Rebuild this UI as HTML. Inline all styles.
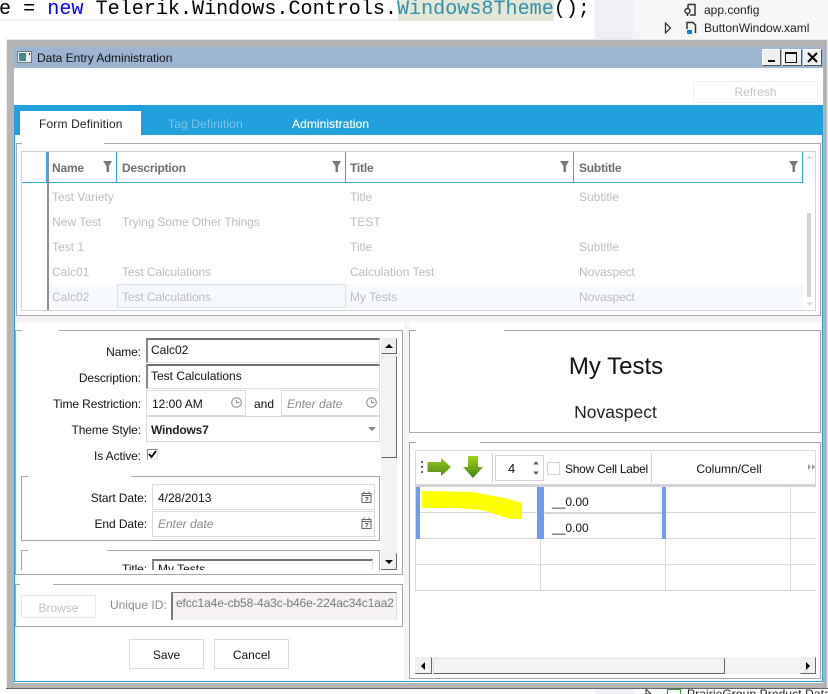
<!DOCTYPE html>
<html><head><meta charset="utf-8"><style>
html,body{margin:0;padding:0;background:#fff}
#p{position:relative;width:828px;height:694px;overflow:hidden;background:#fff;font-family:"Liberation Sans",sans-serif;font-size:12px;color:#111}
#p div{position:absolute;box-sizing:border-box}
.t{white-space:nowrap;line-height:16px;height:16px}
.g{color:#bcbcbc}
.n{letter-spacing:-.1px}
.h{font-weight:bold;color:#6e6e6e;letter-spacing:-.2px}
.r{text-align:right}
.c{text-align:center}
.b{background:#fff;border:1px solid #d9d9d9}
.in{background:#fff;border:1px solid #ddd;border-top:2px solid #707070;border-left:2px solid #8a8a8a}
.gb{border:1px solid #a6a6a6}
.gap{background:#fff;height:3px}
.wb{background:#f0f0f0;border:1px solid;border-color:#fff #555 #555 #fff}
.sb{background:#f0f0f0;border:1px solid;border-color:#eee #666 #666 #eee}
svg{position:absolute;display:block}
</style></head><body><div id="p">

<!-- background code editor -->
<div style="left:0;top:19px;width:398px;height:2px;background:#eee"></div>
<div style="left:398px;top:0;width:156px;height:21px;background:#e4e6d6"></div>
<div style="left:595px;top:0;width:38px;height:40px;background:#f1eff6"></div>
<div style="left:633px;top:0;width:195px;height:40px;background:#f6f6f6"></div>
<div class="t" style="left:-13px;top:-2px;height:24px;font:20.1px/24px 'Liberation Mono',monospace;color:#000">me = <span style="color:#0000ff">new</span> Telerik.Windows.Controls.<span style="color:#2b91af">Windows8Theme</span>();</div>
<svg style="left:684px;top:3px" width="14" height="14" viewBox="0 0 14 14"><path d="M4 1.500H11V12H6M4 1.500V5" fill="none" stroke="#333" stroke-width="1.500"/><circle cx="3.500" cy="8" r="2.500" fill="none" stroke="#333" stroke-width="1.500"/><path d="M3.500 10V13" stroke="#333" stroke-width="1.500"/></svg>
<div class="t" style="left:704px;top:2px;color:#222;font-size:12px">app.config</div>
<svg style="left:664px;top:22px" width="8" height="12" viewBox="0 0 8 12"><path d="M1.500 1V11L6.500 6Z" fill="#fff" stroke="#333" stroke-width="1.300"/></svg>
<svg style="left:684px;top:21px" width="14" height="14" viewBox="0 0 14 14"><path d="M3 8V1.500H9L11.500 4V12" fill="none" stroke="#333" stroke-width="1.500"/><rect x="3" y="9" width="5" height="4" fill="#0a84d0"/></svg>
<div class="t" style="left:704px;top:20px;color:#222;font-size:12px">ButtonWindow.xaml</div>

<!-- window frame -->
<div style="left:6px;top:39px;width:822px;height:1px;background:#e8e8e8"></div>
<div style="left:7px;top:40px;width:820px;height:648px;background:#b5b5b5"></div>
<div style="left:6px;top:688px;width:822px;height:1px;background:#666"></div>
<div style="left:6px;top:40px;width:1px;height:648px;background:#e8e8e8"></div>
<div style="left:827px;top:40px;width:1px;height:648px;background:#eee"></div>
<div style="left:14px;top:47px;width:809px;height:636px;background:#fff"></div>
<div style="left:14px;top:47px;width:809px;height:21px;background:#9cb5d3"></div>
<svg style="left:17px;top:51px" width="15" height="12" viewBox="0 0 15 12"><rect x=".5" y=".5" width="14" height="11" fill="#eee" stroke="#777"/><rect x="2" y="2" width="7" height="8" fill="#3f8a8a"/><rect x="12" y="2" width="1" height="2" fill="#333"/></svg>
<div class="t" style="left:37px;top:50px;font-size:12px;color:#111">Data Entry Administration</div>
<div class="wb" style="left:762px;top:49px;width:19px;height:17px"></div>
<div style="left:768px;top:60px;width:7px;height:2px;background:#111"></div>
<div class="wb" style="left:782px;top:49px;width:20px;height:17px"></div>
<div style="left:785px;top:52px;width:12px;height:11px;border:1px solid #111;border-top-width:2px"></div>
<div class="wb" style="left:803px;top:49px;width:19px;height:17px"></div>
<svg style="left:807px;top:52px" width="11" height="11" viewBox="0 0 11 11"><path d="M1 1L10 10M10 1L1 10" stroke="#000" stroke-width="2"/></svg>

<div style="left:693px;top:81px;width:125px;height:22px;border:1px solid #eee"></div>
<div class="t c g" style="left:693px;top:84px;width:125px;color:#c4c4c4">Refresh</div>

<!-- tabs -->
<div style="left:14px;top:105px;width:809px;height:30px;background:#20a0dd"></div>
<div style="left:20px;top:111px;width:121px;height:24px;background:#fff"></div>
<div class="t" style="left:39px;top:116px;color:#222;letter-spacing:.15px">Form Definition</div>
<div class="t" style="left:168px;top:116px;color:#7fc5ea;letter-spacing:.15px">Tag Definition</div>
<div class="t" style="left:292px;top:116px;color:#fff;letter-spacing:.08px;text-shadow:0 0 .4px #fff">Administration</div>
<div style="left:14px;top:135px;width:1px;height:547px;background:#20a0dd"></div>
<div style="left:822px;top:105px;width:1px;height:577px;background:#20a0dd"></div>
<div style="left:14px;top:681px;width:809px;height:1px;background:#20a0dd"></div>

<!-- top group -->
<div class="gb" style="left:16px;top:143px;width:805px;height:173px"></div>
<div class="gap" style="left:22px;top:142px;width:82px"></div>
<div style="left:21px;top:151px;width:795px;height:160px;border:1px solid #d3d3d3"></div>
<div style="left:22px;top:182px;width:781px;height:1px;background:#33a5df"></div>
<div style="left:46px;top:152px;width:1px;height:31px;background:#33a5df"></div>
<div style="left:47px;top:152px;width:2px;height:158px;background:#8f8f8f"></div>
<div style="left:116px;top:152px;width:1px;height:31px;background:#33a5df"></div>
<div style="left:345px;top:152px;width:1px;height:31px;background:#33a5df"></div>
<div style="left:573px;top:152px;width:1px;height:31px;background:#33a5df"></div>
<div style="left:802px;top:152px;width:1px;height:31px;background:#33a5df"></div>
<div class="t h" style="left:52px;top:160px">Name</div>
<div class="t h" style="left:122px;top:160px">Description</div>
<div class="t h" style="left:350px;top:160px">Title</div>
<div class="t h" style="left:579px;top:160px">Subtitle</div>
<svg style="left:103px;top:161px" width="9" height="11" viewBox="0 0 9 11"><path d="M0 0H9L6 5V11H3.500V5Z" fill="#777"/></svg>
<svg style="left:332px;top:161px" width="9" height="11" viewBox="0 0 9 11"><path d="M0 0H9L6 5V11H3.500V5Z" fill="#777"/></svg>
<svg style="left:560px;top:161px" width="9" height="11" viewBox="0 0 9 11"><path d="M0 0H9L6 5V11H3.500V5Z" fill="#777"/></svg>
<svg style="left:789px;top:161px" width="9" height="11" viewBox="0 0 9 11"><path d="M0 0H9L6 5V11H3.500V5Z" fill="#777"/></svg>

<div style="left:49px;top:285px;width:754px;height:23px;background:#f6f9fe"></div>
<div style="left:117px;top:284px;width:229px;height:24px;border:1px solid #d8e2ea"></div>
<div class="t g" style="left:52px;top:189px">Test Variety</div><div class="t g" style="left:350px;top:189px">Title</div><div class="t g" style="left:579px;top:189px">Subtitle</div>
<div class="t g" style="left:52px;top:214px">New Test</div><div class="t g n" style="left:122px;top:214px">Trying Some Other Things</div><div class="t g" style="left:350px;top:214px">TEST</div>
<div class="t g" style="left:52px;top:239px">Test 1</div><div class="t g" style="left:350px;top:239px">Title</div><div class="t g" style="left:579px;top:239px">Subtitle</div>
<div class="t g" style="left:52px;top:264px">Calc01</div><div class="t g n" style="left:122px;top:264px">Test Calculations</div><div class="t g" style="left:350px;top:264px">Calculation Test</div><div class="t g n" style="left:579px;top:264px">Novaspect</div>
<div class="t g" style="left:52px;top:289px">Calc02</div><div class="t g n" style="left:122px;top:289px">Test Calculations</div><div class="t g" style="left:350px;top:289px">My Tests</div><div class="t g n" style="left:579px;top:289px">Novaspect</div>
<div style="left:807px;top:213px;width:4px;height:84px;background:#d2d2d2"></div>
<svg style="left:806px;top:155px" width="7" height="4" viewBox="0 0 7 4"><path d="M3.500 0L7 4H0Z" fill="#ddd"/></svg>
<svg style="left:806px;top:302px" width="7" height="4" viewBox="0 0 7 4"><path d="M3.500 4L7 0H0Z" fill="#ddd"/></svg>

<!-- pink bands -->
<div style="left:15px;top:316px;width:807px;height:6px;background:#f6f2f5"></div>
<div style="left:404px;top:322px;width:5px;height:359px;background:#f6f2f5"></div>

<!-- left form group -->
<div class="gb" style="left:15px;top:330px;width:388px;height:245px"></div>
<div class="gap" style="left:22px;top:329px;width:37px"></div>

<div class="t r n" style="left:40px;top:344px;width:101px">Name:</div>
<div class="in" style="left:146px;top:338px;width:234px;height:25px"></div>
<div class="t" style="left:151px;top:342px">Calc02</div>
<div class="t r n" style="left:40px;top:370px;width:101px">Description:</div>
<div class="in" style="left:146px;top:364px;width:234px;height:25px"></div>
<div class="t" style="left:151px;top:368px">Test Calculations</div>
<div class="t r n" style="left:40px;top:396px;width:101px">Time Restriction:</div>
<div class="b" style="left:146px;top:390px;width:100px;height:26px"></div>
<div class="t" style="left:152px;top:396px">12:00 AM</div>
<svg style="left:231px;top:397px" width="11" height="11" viewBox="0 0 11 11"><circle cx="5.500" cy="5.500" r="4.800" fill="none" stroke="#888"/><path d="M5.500 2.500V5.500H8.500" fill="none" stroke="#888"/></svg>
<div class="t" style="left:254px;top:396px">and</div>
<div class="b" style="left:281px;top:390px;width:99px;height:26px"></div>
<div class="t" style="left:287px;top:396px;font-style:italic;color:#8a8a8a">Enter date</div>
<svg style="left:366px;top:397px" width="11" height="11" viewBox="0 0 11 11"><circle cx="5.500" cy="5.500" r="4.800" fill="none" stroke="#888"/><path d="M5.500 2.500V5.500H8.500" fill="none" stroke="#888"/></svg>
<div class="t r n" style="left:40px;top:422px;width:101px">Theme Style:</div>
<div class="b" style="left:146px;top:416px;width:234px;height:26px"></div>
<div class="t" style="left:151px;top:422px;font-weight:bold;color:#222;font-size:12px;letter-spacing:-.2px">Windows7</div>
<svg style="left:368px;top:427px" width="8" height="4" viewBox="0 0 8 4"><path d="M0 0H8L4 4Z" fill="#888"/></svg>
<div class="t r n" style="left:40px;top:448px;width:101px">Is Active:</div>
<div style="left:147px;top:449px;width:11px;height:11px;border:1px solid #888;border-bottom-color:#eee;border-right-color:#ddd"></div>
<svg style="left:148px;top:450px" width="9" height="9" viewBox="0 0 9 9"><path d="M1 4L3.500 7L8 1" fill="none" stroke="#000" stroke-width="1.800"/></svg>

<div class="gb" style="left:21px;top:476px;width:359px;height:65px"></div>
<div class="gap" style="left:28px;top:475px;width:103px"></div>
<div class="t r n" style="left:40px;top:490px;width:107px">Start Date:</div>
<div class="b" style="left:152px;top:484px;width:223px;height:26px"></div>
<div class="t" style="left:158px;top:490px">4/28/2013</div>
<svg style="left:361px;top:491px" width="11" height="12" viewBox="0 0 11 12"><rect x="1" y="2.500" width="9" height="9" fill="none" stroke="#666"/><path d="M3 0.500V3M8 0.500V3M1 4.500H10" stroke="#666"/><path d="M4 6.500H7L5 10.500" fill="none" stroke="#666"/></svg>
<div class="t r n" style="left:40px;top:516px;width:107px">End Date:</div>
<div class="b" style="left:152px;top:511px;width:223px;height:26px"></div>
<div class="t" style="left:158px;top:516px;font-style:italic;color:#8a8a8a">Enter date</div>
<svg style="left:361px;top:517px" width="11" height="12" viewBox="0 0 11 12"><rect x="1" y="2.500" width="9" height="9" fill="none" stroke="#666"/><path d="M3 0.500V3M8 0.500V3M1 4.500H10" stroke="#666"/><path d="M4 6.500H7L5 10.500" fill="none" stroke="#666"/></svg>

<!-- third group, clipped by the scroll viewport at y=570 -->
<div style="left:16px;top:546px;width:365px;height:24px;overflow:hidden">
  <div style="left:5px;top:4px;width:359px;height:65px;border:1px solid #a6a6a6"></div>
  <div class="gap" style="left:12px;top:3px;width:79px"></div>
  <div class="t r n" style="left:24px;top:15px;width:107px">Title:</div>
  <div class="in" style="left:136px;top:13px;width:221px;height:40px"></div>
  <div class="t" style="left:142px;top:15px">My Tests</div>
</div>
<div style="left:381px;top:338px;width:16px;height:232px;background:#f5f2f5"></div>
<div class="sb" style="left:381px;top:338px;width:16px;height:16px"></div>
<svg style="left:385px;top:344px" width="8" height="4" viewBox="0 0 8 4"><path d="M4 0L8 4H0Z" fill="#000"/></svg>
<div style="left:381px;top:356px;width:16px;height:102px;background:#f5f2f5;border:1px solid;border-color:#eee #666 #666 #eee"></div>
<div class="sb" style="left:381px;top:553px;width:16px;height:17px"></div>
<svg style="left:385px;top:560px" width="8" height="4" viewBox="0 0 8 4"><path d="M4 4L8 0H0Z" fill="#000"/></svg>

<!-- browse group -->
<div class="gb" style="left:15px;top:584px;width:388px;height:43px"></div>
<div class="gap" style="left:20px;top:583px;width:33px"></div>
<div style="left:21px;top:595px;width:75px;height:23px;border:1px solid #e8e8e8"></div>
<div class="t c" style="left:21px;top:600px;width:75px;color:#c2c2c2">Browse</div>
<div class="t" style="left:110px;top:597px;color:#8a8a8a">Unique ID:</div>
<div style="left:171px;top:592px;width:226px;height:28px;background:#f5f1f5;border-top:1px solid #777;border-left:2px solid #777;border-right:1px solid #ddd"></div>
<div class="t" style="left:176px;top:595px;color:#7a7a7a;letter-spacing:-.12px">efcc1a4e-cb58-4a3c-b46e-224ac34c1aa2</div>

<div style="left:129px;top:639px;width:75px;height:30px;border:1px solid #d9d9d9"></div>
<div class="t c" style="left:129px;top:647px;width:75px">Save</div>
<div style="left:214px;top:639px;width:75px;height:30px;border:1px solid #d9d9d9"></div>
<div class="t c" style="left:214px;top:647px;width:75px">Cancel</div>

<!-- right groups -->
<div class="gb" style="left:409px;top:330px;width:412px;height:103px"></div>
<div class="gap" style="left:416px;top:329px;width:88px"></div>
<div class="t c" style="left:409px;top:353px;width:414px;height:28px;line-height:28px;font-size:24px;color:#111">My Tests</div>
<div class="t c" style="left:409px;top:401px;width:413px;height:22px;line-height:22px;font-size:17.500px;color:#222">Novaspect</div>

<div class="gb" style="left:409px;top:442px;width:412px;height:237px"></div>
<div class="gap" style="left:416px;top:441px;width:64px"></div>

<!-- toolbar -->
<div style="left:415px;top:450px;width:401px;height:37px;border:1px solid #d9d9d9;border-bottom:3px solid #d4d4d4"></div>
<div style="left:421px;top:461px;width:2px;height:2px;background:#666"></div>
<div style="left:421px;top:466px;width:2px;height:2px;background:#666"></div>
<div style="left:421px;top:471px;width:2px;height:2px;background:#666"></div>
<svg style="left:427px;top:456px" width="26" height="24" viewBox="0 0 26 24"><defs><linearGradient id="g1" x1="0" y1="0" x2="0" y2="1"><stop offset="0" stop-color="#9acb1e"/><stop offset="1" stop-color="#4e8a16"/></linearGradient><linearGradient id="g2" x1="0" y1="0" x2="0" y2="1"><stop offset="0" stop-color="#a3d31c"/><stop offset="1" stop-color="#3f8115"/></linearGradient></defs><path d="M.5 6H14V2L24 11L14 20V16H.5Z" fill="url(#g1)"/></svg>
<svg style="left:462px;top:456px" width="22" height="25" viewBox="0 0 22 25"><path d="M6 0H16V11H21L11 22L1 11H6Z" fill="url(#g2)"/></svg>
<div style="left:492px;top:453px;width:1px;height:30px;background:#d4d4d4"></div>
<div style="left:495px;top:455px;width:49px;height:26px;border:1px solid #d4d4d4"></div>
<div class="t" style="left:508px;top:461px;font-size:13px">4</div>
<svg style="left:532px;top:461px" width="8" height="15" viewBox="0 0 8 15"><path d="M4 0L7 3.500H1Z" fill="#666"/><path d="M4 14L7 10.500H1Z" fill="#666"/></svg>
<div style="left:547px;top:462px;width:13px;height:13px;border:1px solid #d4d4d4"></div>
<div class="t" style="left:565px;top:461px;letter-spacing:-.25px">Show Cell Label</div>
<div style="left:651px;top:453px;width:1px;height:30px;background:#d4d4d4"></div>
<div class="t c" style="left:652px;top:461px;width:154px">Column/Cell</div>
<svg style="left:808px;top:464px" width="8" height="6" viewBox="0 0 8 6"><path d="M0 0L3 3L0 6ZM4 0L7 3L4 6Z" fill="#999"/></svg>

<!-- table -->
<div style="left:415px;top:486px;width:1px;height:105px;background:#d9d9d9"></div>
<div style="left:415px;top:512px;width:401px;height:1px;background:#d9d9d9"></div>
<div style="left:415px;top:538px;width:401px;height:1px;background:#d9d9d9"></div>
<div style="left:415px;top:564px;width:401px;height:1px;background:#d9d9d9"></div>
<div style="left:415px;top:590px;width:401px;height:1px;background:#d4d4d4"></div>
<div style="left:540px;top:486px;width:1px;height:105px;background:#d9d9d9"></div>
<div style="left:665px;top:486px;width:1px;height:105px;background:#d9d9d9"></div>
<div style="left:790px;top:486px;width:1px;height:105px;background:#d9d9d9"></div>
<div style="left:416px;top:487px;width:4px;height:52px;background:#6d9bef"></div>
<div style="left:537px;top:487px;width:7px;height:52px;background:#6d9bef"></div>
<div style="left:662px;top:487px;width:4px;height:52px;background:#6d9bef"></div>
<div style="left:545px;top:512px;width:117px;height:2px;background:#d4d4d4"></div>
<div class="t" style="left:552px;top:494px;font-size:12px">__0.00</div>
<div class="t" style="left:552px;top:520px;font-size:12px">__0.00</div>
<svg style="left:0;top:0" width="828" height="694"><path d="M422 491L472 492L505 498L522 503V519H510L482 510L455 508L422 508Z" fill="#ffff00"/></svg>

<!-- h scrollbar -->
<div style="left:415px;top:657px;width:401px;height:17px;background:#f5f2f5"></div>
<div class="sb" style="left:415px;top:657px;width:17px;height:17px"></div>
<svg style="left:421px;top:662px" width="4" height="8" viewBox="0 0 4 8"><path d="M0 4L4 0V8Z" fill="#000"/></svg>
<div style="left:433px;top:658px;width:292px;height:16px;background:#f5f2f5;border:1px solid;border-color:#ddd #666 #666 #ddd"></div>
<div class="sb" style="left:800px;top:657px;width:16px;height:17px"></div>
<svg style="left:806px;top:662px" width="4" height="8" viewBox="0 0 4 8"><path d="M4 4L0 0V8Z" fill="#000"/></svg>

<!-- bottom strip -->
<div style="left:0;top:689px;width:828px;height:5px;background:#fff"></div>
<div style="left:595px;top:689px;width:40px;height:5px;background:#f1eff6"></div>
<svg style="left:645px;top:689px" width="8" height="5" viewBox="0 0 8 5"><path d="M1 0L6 5H1Z" fill="#fff" stroke="#333"/></svg>
<div style="left:667px;top:689px;width:14px;height:5px;border:1px solid #3a9a3a;border-bottom:0"></div>
<div style="left:0;top:689px;width:828px;height:5px;overflow:hidden"><div class="t" style="left:687px;top:-3px;color:#222;letter-spacing:.1px">PrairieGroup.Product.DataEntry</div></div>
</div></body></html>
